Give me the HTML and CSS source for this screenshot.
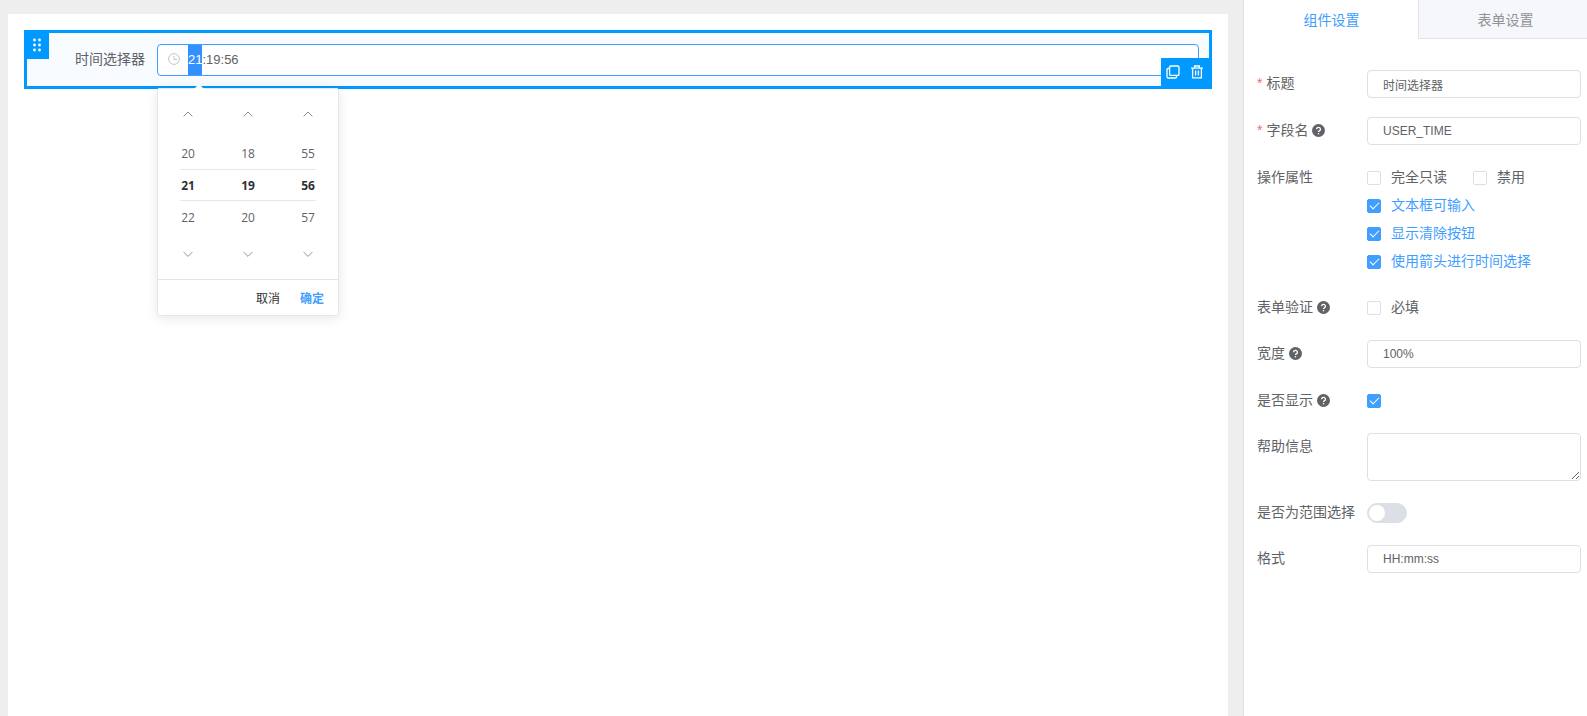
FILE: index.html
```html
<!DOCTYPE html>
<html lang="zh-CN">
<head>
    <meta charset="UTF-8">
    <title>表单设计器</title>
    <link rel="stylesheet" href="styles.css">
    <script>
        function onLoad() {
            const input = document.getElementById("time");
            input.focus();
            //hours are the active segment
            input.setSelectionRange(0, 2);
        }
    </script>
</head>
<body onload="onLoad();">
    <svg class="defs" aria-hidden="true">
        <symbol id="up" viewBox="0 0 12 12"><path d="M1.6 8.4 6 4 10.4 8.4" fill="none" stroke="currentColor"/></symbol>
        <symbol id="down" viewBox="0 0 12 12"><path d="M1.6 4 6 8.4 10.4 4" fill="none" stroke="currentColor"/></symbol>
        <symbol id="help" viewBox="0 0 12 12">
            <circle cx="6" cy="6" r="6" fill="currentColor"/>
            <path d="M4.2 4.8a1.8 1.7 0 1 1 2.6 1.5Q6 6.7 6 7.4" fill="none" stroke="#fff" stroke-width="1.2"/>
            <circle cx="6" cy="9" r=".75" fill="#fff"/>
        </symbol>
    </svg>

    <main class="board">
        <div class="canvas">
            <div class="widget">
                <button class="drag" type="button" aria-label="拖动">
                    <svg width="8" height="14" viewBox="0 0 8 14" fill="#fff">
                        <circle cx="1.5" cy="2" r="1.4"/><circle cx="6.5" cy="2" r="1.4"/>
                        <circle cx="1.5" cy="7" r="1.4"/><circle cx="6.5" cy="7" r="1.4"/>
                        <circle cx="1.5" cy="12" r="1.4"/><circle cx="6.5" cy="12" r="1.4"/>
                    </svg>
                </button>
                <label class="widget-label" for="time">时间选择器</label>
                <div class="time-field">
                    <svg class="clock" width="12" height="12" viewBox="0 0 12 12" fill="none" stroke="currentColor">
                        <circle cx="6" cy="6" r="5.4"/>
                        <path d="M6 2.8V6.5H9"/>
                    </svg>
                    <input id="time" class="time-input" type="text" value="21:19:56" autocomplete="off">
                    <div class="popper">
                        <div class="spinners">
                            <div class="spinner">
                                <button type="button" aria-label="上一时"><svg><use href="#up"/></svg></button>
                                <ul><li>20</li><li class="active">21</li><li>22</li></ul>
                                <button type="button" aria-label="下一时"><svg><use href="#down"/></svg></button>
                            </div>
                            <div class="spinner">
                                <button type="button" aria-label="上一分"><svg><use href="#up"/></svg></button>
                                <ul><li>18</li><li class="active">19</li><li>20</li></ul>
                                <button type="button" aria-label="下一分"><svg><use href="#down"/></svg></button>
                            </div>
                            <div class="spinner">
                                <button type="button" aria-label="上一秒"><svg><use href="#up"/></svg></button>
                                <ul><li>55</li><li class="active">56</li><li>57</li></ul>
                                <button type="button" aria-label="下一秒"><svg><use href="#down"/></svg></button>
                            </div>
                        </div>
                        <div class="popper-footer">
                            <button type="button">取消</button>
                            <button type="button" class="confirm">确定</button>
                        </div>
                    </div>
                </div>
                <div class="actions">
                    <button type="button" aria-label="复制">
                        <svg width="14" height="14" viewBox="0 0 14 14" fill="none" stroke="#fff" stroke-width="1.3">
                            <rect x="3.6" y="1" width="9.4" height="9.4" rx="1.2"/>
                            <path d="M3.4 3.4H2.2Q1 3.4 1 4.6V11.8Q1 13 2.2 13H9.4Q10.6 13 10.6 11.8V10.6"/>
                        </svg>
                    </button>
                    <button type="button" aria-label="删除">
                        <svg width="14" height="14" viewBox="0 0 14 14" fill="none" stroke="#fff" stroke-width="1.3">
                            <path d="M1 3.2H13M4.6 3V1H9.4V3M2.6 3.4V12.8H11.4V3.4M5.6 5.6V10.6M8.4 5.6V10.6"/>
                        </svg>
                    </button>
                </div>
            </div>
        </div>
    </main>

    <aside class="settings">
        <nav class="tabs">
            <a href="#component" class="tab active">组件设置</a>
            <a href="#form" class="tab">表单设置</a>
        </nav>
        <form class="form">
            <div class="row">
                <label class="name required" for="title">标题</label>
                <input id="title" class="text" type="text" value="时间选择器">
            </div>
            <div class="row">
                <label class="name required" for="field">字段名<svg class="help"><use href="#help"/></svg></label>
                <input id="field" class="text" type="text" value="USER_TIME">
            </div>
            <div class="row">
                <span class="name">操作属性</span>
                <div class="checks">
                    <label class="check"><input type="checkbox"><span>完全只读</span></label>
                    <label class="check"><input type="checkbox"><span>禁用</span></label>
                    <label class="check"><input type="checkbox" checked><span>文本框可输入</span></label>
                    <label class="check"><input type="checkbox" checked><span>显示清除按钮</span></label>
                    <label class="check"><input type="checkbox" checked><span>使用箭头进行时间选择</span></label>
                </div>
            </div>
            <div class="row">
                <span class="name">表单验证<svg class="help"><use href="#help"/></svg></span>
                <label class="check"><input type="checkbox"><span>必填</span></label>
            </div>
            <div class="row">
                <label class="name" for="width">宽度<svg class="help"><use href="#help"/></svg></label>
                <input id="width" class="text" type="text" value="100%">
            </div>
            <div class="row">
                <label class="name" for="visible">是否显示<svg class="help"><use href="#help"/></svg></label>
                <div class="check"><input id="visible" type="checkbox" checked></div>
            </div>
            <div class="row">
                <label class="name" for="tip">帮助信息</label>
                <textarea id="tip" class="text"></textarea>
            </div>
            <div class="row">
                <label class="name" for="range">是否为范围选择</label>
                <div class="check"><input id="range" class="switch" type="checkbox" role="switch"></div>
            </div>
            <div class="row">
                <label class="name" for="format">格式</label>
                <input id="format" class="text" type="text" value="HH:mm:ss">
            </div>
        </form>
    </aside>
</body>
</html>
```
FILE: styles.css
```css
*, *::before, *::after {
    box-sizing: border-box;
}
body {
    display: flex;
    min-height: 100vh;
    margin: 0;
    background: #fff;
    color: #606266;
    font-family: "Liberation Sans", "Noto Sans CJK SC", sans-serif;
    font-size: 14px;
}
button {
    padding: 0;
    border: 0;
    background: none;
    color: inherit;
    font: inherit;
    cursor: pointer;
}
input, textarea {
    margin: 0;
    outline: none;
    color: inherit;
    font-family: inherit;
}
svg {
    display: block;
}
.defs {
    position: absolute;
    width: 0;
    height: 0;
}

/* design board */
.board {
    display: flex;
    flex: 1;
    min-width: 0;
    padding: 14px 15px 0 8px;
    background: #eee;
}
.canvas {
    flex: 1;
    min-width: 0;
    padding: 16px;
    background: #fff;
}
.widget {
    position: relative;
    display: flex;
    padding: 11px 10px 10px 0;
    border: 3px solid #09f;
    background: #f8fcff;
}
.drag {
    position: absolute;
    top: -3px;
    left: -3px;
    display: flex;
    align-items: center;
    justify-content: center;
    width: 25px;
    height: 29px;
    background: #09f;
    cursor: move;
}
.widget-label {
    width: 130px;
    padding-right: 12px;
    line-height: 30px;
    text-align: right;
}
.time-field {
    position: relative;
    flex: 1;
}
.time-input {
    display: block;
    width: 100%;
    height: 32px;
    padding: 0 30px 2px;
    border: 1px solid #409eff;
    border-radius: 4px;
    background: #fff;
    font-size: 13px;
}
/* the active segment is filled over the full height of the box */
.time-input:focus {
    background: linear-gradient(#3390ff, #3390ff) 30px 0 / 14px 100% no-repeat #fff;
}
.time-input::selection {
    background: #3390ff;
    color: #fff;
}
.clock {
    position: absolute;
    top: 9px;
    left: 11px;
    color: #c0c4cc;
}
.actions {
    position: absolute;
    right: -3px;
    bottom: -3px;
    display: flex;
    gap: 10px;
    align-items: center;
    width: 51px;
    height: 31px;
    padding: 0 5px 4px;
    background: #09f;
}

/* time dropdown */
.popper {
    position: absolute;
    z-index: 10;
    top: 44px;
    left: 0;
    width: 182px;
    border: 1px solid #e4e7ed;
    border-radius: 2px;
    background: #fff;
    box-shadow: 0 2px 12px rgba(0, 0, 0, .1);
    font-family: "Open Sans", "Noto Sans CJK SC", sans-serif;
    font-size: 12px;
}
.popper::before {
    content: "";
    position: absolute;
    top: -5px;
    left: 35px;
    border: 6px solid transparent;
    border-top: 0;
    border-bottom-color: #fff;
}
.spinners {
    position: relative;
    display: flex;
    padding: 10px 0;
}
.spinners::before {
    content: "";
    position: absolute;
    top: 80px;
    left: 22px;
    right: 22px;
    height: 32px;
    border: solid #e4e7ed;
    border-width: 1px 0;
}
.spinner {
    flex: 1;
}
.spinner button {
    position: relative;
    display: flex;
    align-items: center;
    justify-content: center;
    width: 100%;
    height: 30px;
    color: #909399;
}
.spinner svg {
    width: 12px;
    height: 12px;
}
.spinner ul {
    margin: 9px 0 5px;
    padding: 0;
    list-style: none;
    line-height: 32px;
    text-align: center;
}
.spinner .active {
    color: #303133;
    font-weight: bold;
}
.popper-footer {
    display: flex;
    gap: 20px;
    justify-content: flex-end;
    height: 36px;
    padding: 0 14px;
    border-top: 1px solid #e4e4e4;
    color: #303133;
}
.popper-footer .confirm {
    color: #409eff;
    font-weight: bold;
}

/* settings panel */
.settings {
    flex: none;
    width: 344px;
    overflow: hidden;
    border-left: 1px solid #dcdfe6;
}
.tabs {
    display: flex;
}
.tab {
    flex: none;
    width: 174px;
    height: 39px;
    border-bottom: 1px solid #dfe4ed;
    border-left: 1px solid #dfe4ed;
    background: #f5f7fa;
    color: #909399;
    line-height: 40px;
    text-align: center;
    text-decoration: none;
}
.tab.active {
    border-color: transparent;
    background: #fff;
    color: #409eff;
}
.form {
    display: flex;
    flex-direction: column;
    gap: 18px;
    padding: 31px 6px 31px 13px;
}
.row {
    display: flex;
    align-items: flex-start;
}
.name {
    display: flex;
    flex: none;
    align-items: center;
    width: 110px;
    line-height: 26px;
}
.required::before {
    content: "*";
    margin-right: 4px;
    color: #f56c6c;
}
.help {
    width: 13px;
    height: 13px;
    margin-left: 4px;
}
.text {
    flex: 1;
    min-width: 0;
    height: 28px;
    margin-bottom: 1px;
    padding: 0 15px;
    border: 1px solid #dcdfe6;
    border-radius: 4px;
    background: #fff;
    font-size: 12px;
}
textarea.text {
    height: 48px;
    margin-bottom: 0;
    padding: 5px 15px;
    resize: vertical;
}
.checks {
    display: flex;
    flex: 1;
    flex-wrap: wrap;
    column-gap: 26px;
}
.check {
    display: flex;
    gap: 10px;
    align-items: center;
    height: 28px;
    line-height: 28px;
}
.check span {
    height: 28px;
    line-height: 26px;
}
.check input {
    display: grid;
    place-items: center;
    width: 14px;
    height: 14px;
    border: 1px solid #dcdfe6;
    border-radius: 2px;
    background: #fff;
    appearance: none;
}
.check input:checked {
    border-color: #409eff;
    background: #409eff;
}
.check input:checked::after {
    content: "";
    width: 5px;
    height: 9px;
    margin-bottom: 3px;
    border: solid #fff;
    border-width: 0 1px 1px 0;
    transform: rotate(45deg);
}
.check input:checked + span {
    color: #409eff;
}
.check .switch {
    place-items: center start;
    width: 40px;
    height: 20px;
    border-radius: 10px;
    background: #dcdfe6;
}
.switch::before {
    content: "";
    width: 16px;
    height: 16px;
    margin-left: 1px;
    border-radius: 50%;
    background: #fff;
}
```
